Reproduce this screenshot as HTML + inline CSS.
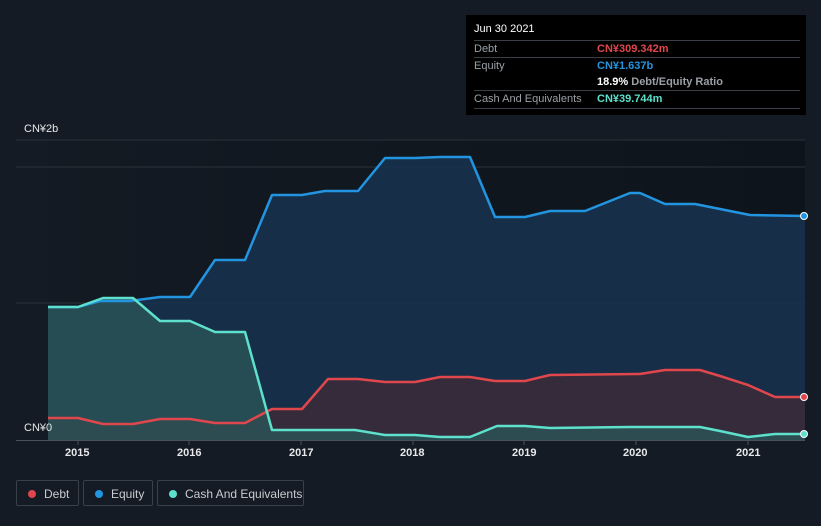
<!DOCTYPE html>
<html><head><meta charset="utf-8"><style>
body{margin:0;width:821px;height:526px;background:#151b24;font-family:"Liberation Sans",Arial,sans-serif;overflow:hidden;position:relative}
.tip{position:absolute;left:466px;top:15px;width:340px;height:100px;background:#000;color:#fff;font-size:11px}
.tip .r{position:absolute;left:8px;right:6px;height:17px;border-top:1px solid #3a3f46;line-height:17px;color:#9aa0a6}
.tip .v{position:absolute;left:123px;font-weight:bold}
.leg{position:absolute;top:480px;height:26px;border:1px solid #3a4048;border-radius:2px;color:#c8ccd0;font-size:12px;line-height:26px;box-sizing:border-box}
.leg i{position:absolute;left:11px;top:9px;width:8px;height:8px;border-radius:50%}
.leg span{position:absolute;left:27px}
.ax{position:absolute;top:447px;color:#e6e8ea;font-size:11px;font-weight:bold}
</style></head><body>
<svg width="821" height="526" style="position:absolute;left:0;top:0">
<defs><linearGradient id="bg" x1="0" x2="1"><stop offset="0" stop-color="#131a23"/><stop offset="1" stop-color="#0e141b"/></linearGradient></defs>
<rect x="48" y="140" width="757" height="300" fill="url(#bg)"/>
<line x1="16" y1="140" x2="805" y2="140" stroke="#2c323a"/>
<line x1="16" y1="167" x2="805" y2="167" stroke="#2c323a"/>
<line x1="16" y1="303" x2="805" y2="303" stroke="#2c323a"/>
<polygon fill="#17334f" opacity="0.85" points="48,440 48,307 78,307 100,301 130,301 160,297 190,297 215,260 245,260 272,195 302,195 325,191 358,191 385,158 415,158 440,157 470,157 495,217 525,217 550,211 585,211 630,193 640,193 665,204 695,204 720,209 750,215 805,216 805,440"/>
<polygon fill="#3a2b38" opacity="0.9" points="48,440 48,418 78,418 103,424 133,424 160,419 190,419 215,423 245,423 272,409 302,409 328,379 358,379 385,382 415,382 440,377 470,377 495,381 525,381 550,375 640,374 665,370 700,370 720,376 748,385 775,397 805,397 805,440"/>
<polygon fill="#2b5558" opacity="0.8" points="48,440 48,307 78,307 103,298 133,298 160,321 190,321 215,332 245,332 272,430 355,430 385,435 415,435 440,437 470,437 497,426 525,426 550,428 630,427 700,427 720,431 748,437 775,434 805,434 805,440"/>
<polyline fill="none" stroke="#2394df" stroke-width="2.5" stroke-linejoin="round" points="48,307 78,307 100,301 130,301 160,297 190,297 215,260 245,260 272,195 302,195 325,191 358,191 385,158 415,158 440,157 470,157 495,217 525,217 550,211 585,211 630,193 640,193 665,204 695,204 720,209 750,215 805,216"/>
<polyline fill="none" stroke="#e0474c" stroke-width="2.5" stroke-linejoin="round" points="48,418 78,418 103,424 133,424 160,419 190,419 215,423 245,423 272,409 302,409 328,379 358,379 385,382 415,382 440,377 470,377 495,381 525,381 550,375 640,374 665,370 700,370 720,376 748,385 775,397 805,397"/>
<polyline fill="none" stroke="#5de0cc" stroke-width="2.5" stroke-linejoin="round" points="48,307 78,307 103,298 133,298 160,321 190,321 215,332 245,332 272,430 355,430 385,435 415,435 440,437 470,437 497,426 525,426 550,428 630,427 700,427 720,431 748,437 775,434 805,434"/>
<circle cx="804" cy="216" r="3.5" fill="#2394df" stroke="#fff" stroke-width="1"/>
<circle cx="804" cy="397" r="3.5" fill="#e0474c" stroke="#fff" stroke-width="1"/>
<circle cx="804" cy="434" r="3.5" fill="#5de0cc" stroke="#fff" stroke-width="1"/>
<line x1="16" y1="440.5" x2="805" y2="440.5" stroke="#4a5058"/>
<g stroke="#4a5058"><line x1="78" y1="440" x2="78" y2="445"/><line x1="189" y1="440" x2="189" y2="445"/><line x1="301" y1="440" x2="301" y2="445"/><line x1="413" y1="440" x2="413" y2="445"/><line x1="524" y1="440" x2="524" y2="445"/><line x1="636" y1="440" x2="636" y2="445"/><line x1="748" y1="440" x2="748" y2="445"/></g>
</svg>
<div style="position:absolute;left:24px;top:123px;color:#e6e8ea;font-size:11px">CN¥2b</div>
<div style="position:absolute;left:24px;top:422px;color:#e6e8ea;font-size:11px">CN¥0</div>
<div class="ax" style="left:65px">2015</div><div class="ax" style="left:177px">2016</div><div class="ax" style="left:289px">2017</div><div class="ax" style="left:400px">2018</div><div class="ax" style="left:512px">2019</div><div class="ax" style="left:623px">2020</div><div class="ax" style="left:736px">2021</div>
<div class="tip">
<div style="position:absolute;left:8px;top:8px;font-size:11px">Jun 30 2021</div>
<div class="r" style="top:25px">Debt<span class="v" style="color:#e0474c">CN¥309.342m</span></div>
<div class="r" style="top:42px">Equity<span class="v" style="color:#2394df">CN¥1.637b</span></div>
<div class="r" style="top:59px;border-top:none"><span class="v" style="color:#fff">18.9% <span style="color:#9aa0a6">Debt/Equity Ratio</span></span></div>
<div class="r" style="top:75px">Cash And Equivalents<span class="v" style="color:#5de0cc">CN¥39.744m</span></div>
<div style="position:absolute;left:8px;right:6px;top:93px;border-top:1px solid #3a3f46"></div>
</div>
<div class="leg" style="left:16px;width:63px"><i style="background:#e0474c"></i><span>Debt</span></div>
<div class="leg" style="left:83px;width:70px"><i style="background:#2394df"></i><span>Equity</span></div>
<div class="leg" style="left:157px;width:147px"><i style="background:#5de0cc"></i><span>Cash And Equivalents</span></div>
</body></html>
